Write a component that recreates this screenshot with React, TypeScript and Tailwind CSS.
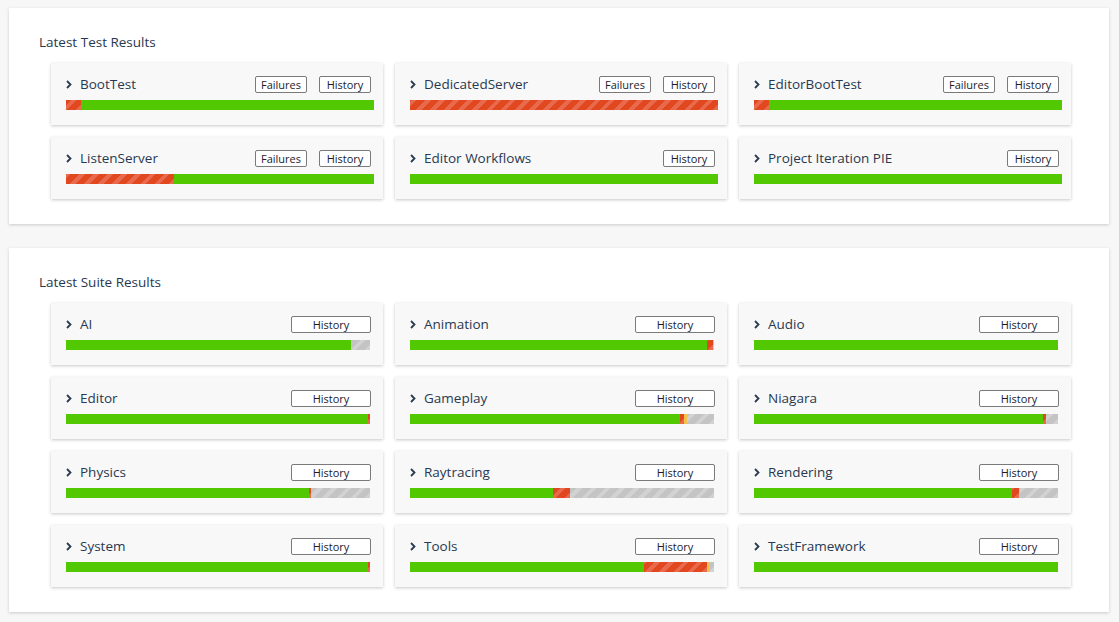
import React from 'react';

type Seg = { kind: 'pass' | 'fail' | 'warn' | 'skip'; w: number };

type Row = { name: string; failures?: boolean; segs: Seg[] };

const testRows: Row[] = [
  { name: 'BootTest', failures: true, segs: [{ kind: 'fail', w: 15 }, { kind: 'pass', w: 293 }] },
  { name: 'DedicatedServer', failures: true, segs: [{ kind: 'fail', w: 308 }] },
  { name: 'EditorBootTest', failures: true, segs: [{ kind: 'fail', w: 15 }, { kind: 'pass', w: 293 }] },
  { name: 'ListenServer', failures: true, segs: [{ kind: 'fail', w: 108 }, { kind: 'pass', w: 200 }] },
  { name: 'Editor Workflows', segs: [{ kind: 'pass', w: 308 }] },
  { name: 'Project Iteration PIE', segs: [{ kind: 'pass', w: 308 }] },
];

const suiteRows: Row[] = [
  { name: 'AI', segs: [{ kind: 'pass', w: 285 }, { kind: 'skip', w: 19 }] },
  { name: 'Animation', segs: [{ kind: 'pass', w: 297 }, { kind: 'fail', w: 6 }, { kind: 'skip', w: 1 }] },
  { name: 'Audio', segs: [{ kind: 'pass', w: 304 }] },
  { name: 'Editor', segs: [{ kind: 'pass', w: 302 }, { kind: 'fail', w: 2 }] },
  { name: 'Gameplay', segs: [{ kind: 'pass', w: 270 }, { kind: 'fail', w: 4 }, { kind: 'warn', w: 3 }, { kind: 'skip', w: 27 }] },
  { name: 'Niagara', segs: [{ kind: 'pass', w: 289 }, { kind: 'fail', w: 3 }, { kind: 'skip', w: 12 }] },
  { name: 'Physics', segs: [{ kind: 'pass', w: 243 }, { kind: 'fail', w: 2 }, { kind: 'skip', w: 59 }] },
  { name: 'Raytracing', segs: [{ kind: 'pass', w: 143 }, { kind: 'fail', w: 17 }, { kind: 'skip', w: 144 }] },
  { name: 'Rendering', segs: [{ kind: 'pass', w: 258 }, { kind: 'fail', w: 7 }, { kind: 'warn', w: 1 }, { kind: 'skip', w: 38 }] },
  { name: 'System', segs: [{ kind: 'pass', w: 302 }, { kind: 'fail', w: 2 }] },
  { name: 'Tools', segs: [{ kind: 'pass', w: 234 }, { kind: 'fail', w: 63 }, { kind: 'warn', w: 3 }, { kind: 'skip', w: 4 }] },
  { name: 'TestFramework', segs: [{ kind: 'pass', w: 304 }] },
];

const segClass: Record<Seg['kind'], string> = {
  pass: 'bg-[#52c800]',
  fail: 'bg-[#e1481f] bg-[image:repeating-linear-gradient(-45deg,#e8694c_0_4px,#e1481f_4px_10px)]',
  warn: 'bg-[#f2c14a]',
  skip: 'bg-[#c4c4c4] bg-[image:repeating-linear-gradient(-45deg,#d2d2d2_0_4px,#c4c4c4_4px_10px)]',
};

const Chevron = () => (
  <svg width="6" height="9" viewBox="0 0 6 9" className="mr-[8px] shrink-0">
    <polyline points="1,1 4.5,4.5 1,8" fill="none" stroke="#2b3a4e" strokeWidth="1.8" />
  </svg>
);

const Btn: React.FC<{ label: string; wide?: boolean }> = ({ label, wide }) => (
  <button
    className={`flex items-center justify-center h-[17px] ${wide ? 'w-[80px]' : 'w-[52px]'} border border-[#7a7a7a] rounded-[2px] bg-white text-[11px] leading-none text-[#1b1b2b] shrink-0`}
  >
    {label}
  </button>
);

const Card: React.FC<{ row: Row; suite?: boolean }> = ({ row, suite }) => (
  <div
    className={`bg-[#f8f8f8] shadow-[0_1px_3px_rgba(0,0,0,0.22)] pt-[13px] pb-[15px] pl-[15px] ${suite ? 'pr-[13px]' : 'pr-[9px]'}`}
  >
    <div className={`flex items-center gap-[12px] h-[17px] ${suite ? 'mr-[-1px]' : 'pr-[3px]'}`}>
      <div className="flex items-center flex-1">
        <Chevron />
        <span className="text-[13.5px] leading-[17px] text-[#283850]">{row.name}</span>
      </div>
      {row.failures && <Btn label="Failures" />}
      <Btn label="History" wide={suite} />
    </div>
    <div className="flex h-[10px] mt-[7px]">
      {row.segs.map((s, i) => (
        <div key={i} className={segClass[s.kind]} style={{ flexGrow: s.w, flexBasis: 0 }} />
      ))}
    </div>
  </div>
);

const Panel: React.FC<{ title: string; rows: Row[]; suite?: boolean }> = ({ title, rows, suite }) => (
  <div className="bg-white shadow-[0_1px_3px_rgba(0,0,0,0.18)] w-[1100px] pt-[25px] pb-[25px]">
    <h2 className="text-[13.5px] leading-[18px] text-[#283850] pl-[30px] mb-[12px]">{title}</h2>
    <div className="grid grid-cols-[332px_332px_332px] gap-[12px] pl-[42px]">
      {rows.map((r) => (
        <Card key={r.name} row={r} suite={suite} />
      ))}
    </div>
  </div>
);

export default function App() {
  return (
    <div className="min-h-screen bg-[#f7f7f7] pt-[8px] pl-[9px] flex flex-col gap-[24px] font-['Open_Sans',sans-serif]">
      <Panel title="Latest Test Results" rows={testRows} />
      <Panel title="Latest Suite Results" rows={suiteRows} suite />
    </div>
  );
}
